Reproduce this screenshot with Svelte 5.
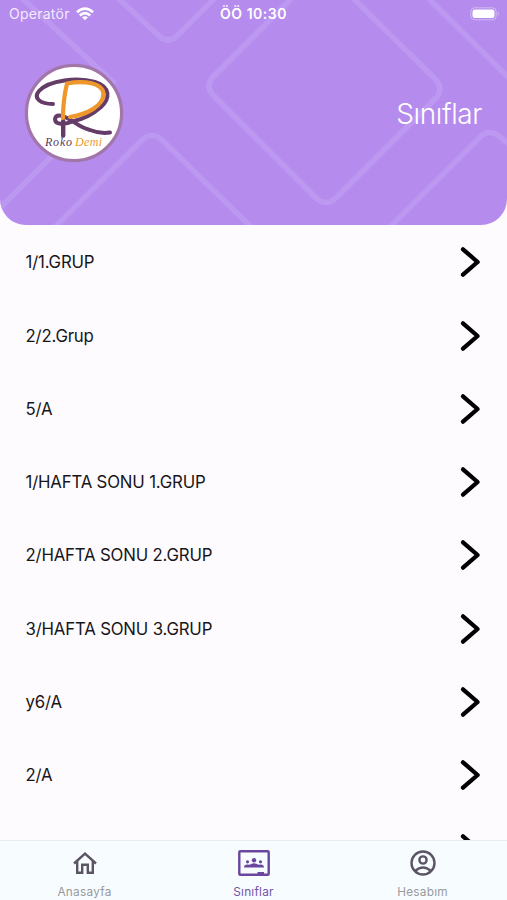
<script>
  const classes = ['1/1.GRUP', '2/2.Grup', '5/A', '1/HAFTA SONU 1.GRUP', '2/HAFTA SONU 2.GRUP', '3/HAFTA SONU 3.GRUP', 'y6/A', '2/A', ''];
</script>

<div class="screen">
  <header>
    <svg class="pattern" viewBox="0 0 507 225" width="507" height="225" aria-hidden="true">
      <path d="M22-2 115 84M0 208 58 150M118-2l40 37q10 10 20 0L217-4M292-2 213 77q-8 9 0 18L316 198q10 9 20 0L436 98q8-9 0-18L353-2M428-2 510 79M54 228l88-88q10-9 20 0l90 88M389 228l92-92q9-7 18 0l10 8" />
    </svg>
    <div class="status">
      <div class="carrier">
        <span>Operatör</span>
        <svg width="18" height="14" viewBox="0 0 18 14" fill="none" stroke="#fff" stroke-width="2.7">
          <path d="M1 5.3Q9-2 17 5.3M3.8 8.5Q9 3.9 14.2 8.5" />
          <path d="M9 13.2 6 10.3Q9 8 12 10.3Z" fill="#fff" stroke="none" />
        </svg>
      </div>
      <strong>ÖÖ 10:30</strong>
      <div class="power">
        <svg width="30" height="14" viewBox="0 0 30 14">
          <rect x=".8" y=".8" width="25.4" height="12" rx="3.8" fill="none" stroke="#fff" stroke-opacity=".4" />
          <rect x="2.5" y="2.5" width="22" height="8.6" rx="2.3" fill="#fff" />
          <path d="M27.8 4.8q2 2 0 4Z" fill="#fff" opacity=".5" />
        </svg>
      </div>
    </div>
    <div class="title">
      <svg class="logo" width="100" height="100" viewBox="0 0 100 100">
        <circle cx="50" cy="50" r="47.6" fill="#fff" stroke="#a276a9" stroke-width="3.2" />
        <g fill="none" stroke-linecap="round" stroke-linejoin="round">
          <path d="M29 41C16 41 9 35 15 28C25 17 54 14 71 19C87 24 86 36 77 44C68 52 59 56 50 58C40 62 31 62 31 56C32 50 40 53 45 56C52 60 57 65 66 67Q76 71 86 69.5" stroke="#653b68" stroke-width="4" />
          <path d="M39.2 58V72.5" stroke="#653b68" stroke-width="4.4" />
          <path d="M39 55Q39 37 43 20.5C60 17 79 20 79.5 31C79 43 64 51 46 54" stroke="#ee982b" stroke-width="4.2" />
        </g>
        <text x="21" y="83" textLength="27" fill="#5c3c60">Roko</text>
        <text x="51" y="83" textLength="27" fill="#ee982b">Demi</text>
      </svg>
      <h1>Sınıflar</h1>
    </div>
  </header>

  <main>
    {#each classes as name}
      <div class="row">
        <span>{name}</span>
        <svg width="22" height="32" viewBox="0 0 22 32" fill="none" stroke="#000" stroke-width="4.3" stroke-linecap="round" stroke-linejoin="round">
          <path d="M4 3.3 18.6 16 4 28.7" />
        </svg>
      </div>
    {/each}
  </main>

  <nav>
    <div class="tab">
      <svg width="32" height="28" viewBox="0 0 32 28" fill="none" stroke="#5b5563" stroke-width="2.4">
        <path d="m5 14.5 11-10 11 10M8.2 12v11.8h5v-8h5.6v8h5V12" />
      </svg>
      <span>Anasayfa</span>
    </div>
    <div class="tab active">
      <svg width="32" height="28" viewBox="0 0 32 28">
        <rect x="1.3" y="2.3" width="29.4" height="23.4" rx="1" fill="none" stroke="#6a469f" stroke-width="2.4" />
        <g fill="#6a469f">
          <circle cx="16" cy="11.2" r="2.2" /><circle cx="9.5" cy="12.8" r="1.6" /><circle cx="22.5" cy="12.8" r="1.6" />
          <path d="M6 18.5q0-3 3.5-3l2 .3Q16 12.5 20.5 15.8l2-.3q3.5 0 3.5 3ZM19.5 23h6.5v2h-6.5Z" />
        </g>
      </svg>
      <span>Sınıflar</span>
    </div>
    <div class="tab">
      <svg width="32" height="28" viewBox="0 0 32 28" fill="none" stroke="#5b5563" stroke-width="2.4">
        <circle cx="16" cy="14" r="11.5" /><circle cx="16" cy="11" r="3.6" /><path d="M8 22Q16 15 24 22" />
      </svg>
      <span>Hesabım</span>
    </div>
  </nav>
</div>

<style>
  :global(body) { margin: 0; }
  .screen { width: 507px; height: 900px; display: flex; flex-direction: column; overflow: hidden; background: #fefbff; font-family: Inter, sans-serif; }
  header { position: relative; height: 225px; flex: none; overflow: hidden; border-radius: 0 0 26px 26px; background: #b58bee; color: #fff; }
  .pattern { position: absolute; inset: 0; fill: none; stroke: #bd98f1; stroke-width: 5.5; }
  .status { position: relative; display: grid; grid-template-columns: 1fr auto 1fr; align-items: center; height: 27px; padding: 0 7px 0 9px; font-size: 14px; }
  .status svg { display: block; }
  .status strong { font-weight: 600; letter-spacing: .5px; margin-right: 2px; }
  .carrier { display: flex; align-items: center; gap: 6px; color: #f4eafd; letter-spacing: .25px; }
  .power { display: flex; justify-content: flex-end; }
  .title { position: relative; display: flex; align-items: center; justify-content: space-between; margin-top: 36px; padding: 0 25px 0 24px; }
  .logo text { font: italic 12px "Liberation Serif", serif; }
  h1 { margin: 2px 0 0; font-size: 28px; font-weight: 350; line-height: 34px; letter-spacing: -.4px; }
  main { flex: 1; min-height: 0; overflow: hidden; padding-top: .6px; }
  .row { display: flex; align-items: center; justify-content: space-between; height: 73.3px; padding: 0 26px 0 25.5px; color: #171619; font-size: 16.8px; letter-spacing: -.18px; }
  nav { display: flex; height: 59px; flex: none; border-top: 1px solid #e3eff2; background: #f7fdff; }
  .tab { flex: 1; display: flex; flex-direction: column; align-items: center; padding-top: 8px; color: #989a9e; font-size: 11.8px; line-height: 15px; letter-spacing: .25px; }
  .tab span { margin-top: 8px; }
  .active { color: #7651a8; }
</style>
